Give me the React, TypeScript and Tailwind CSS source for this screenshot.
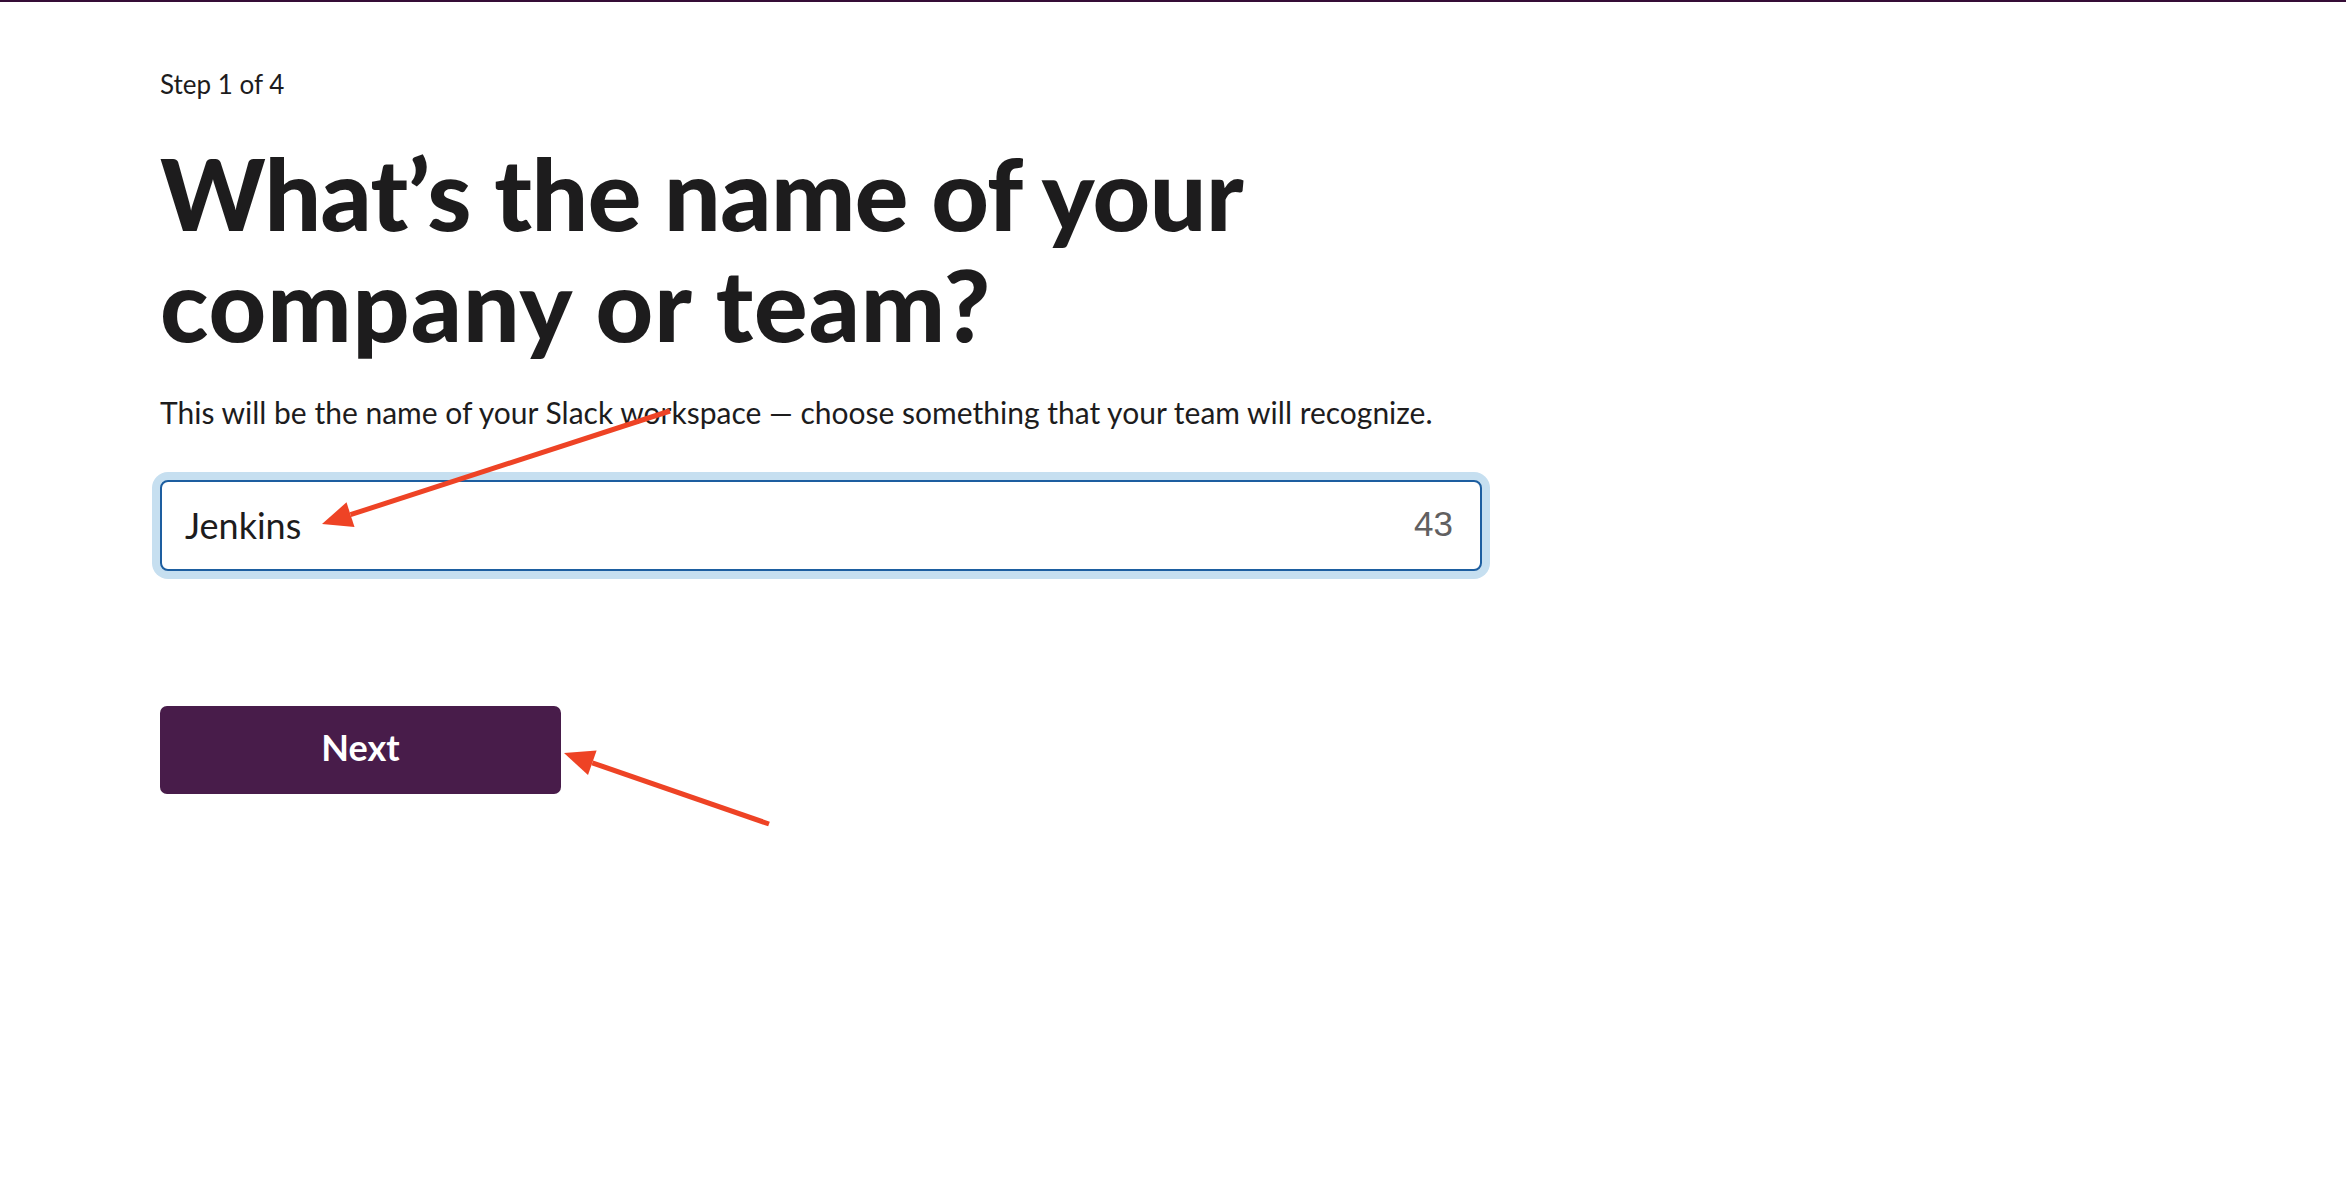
export default function App() {
  return (
    <div className="relative min-h-[1180px] w-full bg-white text-[#1d1c1d] font-['Lato',sans-serif]">
      <div className="h-[2px] bg-[#350d36]" />
      <div className="flex flex-col items-start pl-[160px] pt-[67px]">
        <div className="text-[26px] leading-[30px]">Step 1 of 4</div>
        <h1 className="mt-[38px] text-[100px] font-black leading-[111px]">
          <span className="block tracking-[-0.005em]">What’s the name of your</span>
          <span className="block tracking-[0.01em]">company or team?</span>
        </h1>
        <p className="mt-[35px] text-[30px] leading-[36px]">
          This will be the name of your Slack workspace — choose something that your team will recognize.
        </p>
        <div className="mt-[50px] flex h-[91px] w-[1322px] items-center justify-between rounded-[8px] border-2 border-[#1d5ea0] bg-white pb-[2px] pl-[23px] pr-[27px] shadow-[0_0_0_8px_#c6dff0]">
          <span className="text-[36px]">Jenkins</span>
          <span className="font-['Liberation_Sans',sans-serif] text-[35px] text-[#616061]">43</span>
        </div>
        <button className="mt-[134.5px] flex h-[88px] w-[401px] items-center justify-center rounded-[7px] bg-[#481c4a] pb-[5px] text-[36px] font-bold text-white">
          Next
        </button>
      </div>
      <svg className="pointer-events-none absolute left-0 top-0" width="2346" height="1180" viewBox="0 0 2346 1180">
        <line x1="670" y1="411" x2="350.5" y2="514.7" stroke="#ee4325" strokeWidth="5" />
        <polygon points="322,524 354.5,527.1 346.5,502.3" fill="#ee4325" />
        <line x1="769" y1="824" x2="592.3" y2="762.8" stroke="#ee4325" strokeWidth="5" />
        <polygon points="564,753 596.6,750.5 588,775.1" fill="#ee4325" />
      </svg>
    </div>
  );
}
